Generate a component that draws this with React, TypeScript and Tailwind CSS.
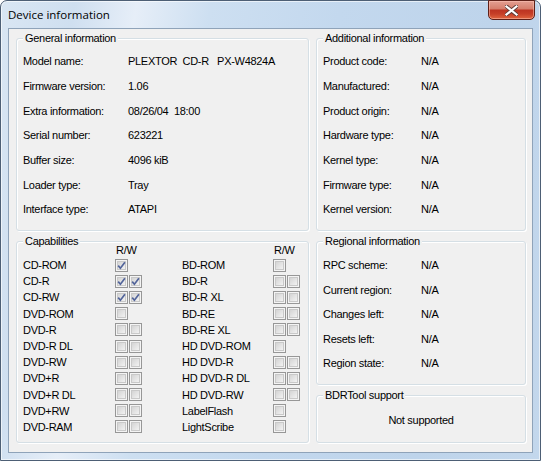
import React from "react";

const F = { fontFamily: '"Liberation Sans", Arial, sans-serif' };

function Group({ title, className, children }: { title: string; className: string; children?: React.ReactNode }) {
  return (
    <div
      className={
        "relative rounded-[3px] border border-[#d5dfe5] shadow-[inset_1px_1px_0_#ffffff,1px_1px_0_#ffffff] " + className
      }
    >
      <span className="absolute -top-[8px] left-[6px] bg-[#f0f0f0] px-[2px] leading-[14px] whitespace-nowrap">{title}</span>
      {children}
    </div>
  );
}

function Box({ checked }: { checked?: boolean }) {
  return (
    <svg width="13" height="13" viewBox="0 0 13 13" className="block shrink-0">
      <defs>
        <linearGradient id="cbg" x1="0" y1="0" x2="1" y2="1">
          <stop offset="0" stopColor="#d2d2d2" />
          <stop offset="1" stopColor="#f4f4f4" />
        </linearGradient>
      </defs>
      <rect x="0.5" y="0.5" width="12" height="12" fill="#f4f4f4" stroke="#979797" />
      <rect x="2.5" y="2.5" width="8" height="8" fill="url(#cbg)" stroke="#c9c9c9" />
      {checked && (
        <path d="M3.2 6.6 L5.4 9.2 L9.9 3.2" fill="none" stroke="#52649a" strokeWidth="1.7" strokeLinejoin="miter" />
      )}
    </svg>
  );
}

function Boxes({ n, c }: { n: number; c: boolean[] }) {
  return (
    <div className="flex gap-[1px]">
      <Box checked={c[0]} />
      {n === 2 && <Box checked={c[1]} />}
    </div>
  );
}

const general: [string, string][] = [
  ["Model name:", "PLEXTOR  CD-R   PX-W4824A"],
  ["Firmware version:", "1.06"],
  ["Extra information:", "08/26/04  18:00"],
  ["Serial number:", "623221"],
  ["Buffer size:", "4096 kiB"],
  ["Loader type:", "Tray"],
  ["Interface type:", "ATAPI"],
];

const additional = [
  "Product code:",
  "Manufactured:",
  "Product origin:",
  "Hardware type:",
  "Kernel type:",
  "Firmware type:",
  "Kernel version:",
];

const regional = ["RPC scheme:", "Current region:", "Changes left:", "Resets left:", "Region state:"];

type Cap = [string, number, boolean[]];
const left: Cap[] = [
  ["CD-ROM", 1, [true]],
  ["CD-R", 2, [true, true]],
  ["CD-RW", 2, [true, true]],
  ["DVD-ROM", 1, [false]],
  ["DVD-R", 2, [false, false]],
  ["DVD-R DL", 2, [false, false]],
  ["DVD-RW", 2, [false, false]],
  ["DVD+R", 2, [false, false]],
  ["DVD+R DL", 2, [false, false]],
  ["DVD+RW", 2, [false, false]],
  ["DVD-RAM", 2, [false, false]],
];
const right: Cap[] = [
  ["BD-ROM", 1, [false]],
  ["BD-R", 2, [false, false]],
  ["BD-R XL", 2, [false, false]],
  ["BD-RE", 2, [false, false]],
  ["BD-RE XL", 2, [false, false]],
  ["HD DVD-ROM", 1, [false]],
  ["HD DVD-R", 2, [false, false]],
  ["HD DVD-R DL", 2, [false, false]],
  ["HD DVD-RW", 2, [false, false]],
  ["LabelFlash", 1, [false]],
  ["LightScribe", 1, [false]],
];

export default function App() {
  return (
    <div className="w-[541px] h-[461px] overflow-hidden bg-white">
      <div className="w-[541px] h-[461px] flex flex-col rounded-t-[7px] border border-[#4d5f75] bg-[linear-gradient(100deg,#d9e6f3_0%,#cfdff0_12%,#e6eef8_22%,#cddff1_34%,#c3d8ee_55%,#bed4eb_80%,#c3d7ec_100%)] shadow-[inset_0_0_0_1px_rgba(255,255,255,0.6)]">
        {/* title bar */}
        <div className="h-[27px] flex items-start justify-between">
          <div
            className="pl-[7px] pt-[6px] text-[11.5px] leading-[16px] text-black"
            style={{ fontFamily: '"Open Sans", "Noto Sans", sans-serif' }}
          >
            Device information
          </div>
          <div className="mr-[5px] -mt-[1px] w-[47px] h-[20px] rounded-b-[5px] border border-[#5e2018] bg-[linear-gradient(180deg,#e39f92_0%,#d67f6d_42%,#bd3522_52%,#c63f28_72%,#e0663f_100%)] shadow-[inset_0_0_0_1px_rgba(255,200,185,0.5)] flex items-center justify-center">
            <svg width="13" height="11" viewBox="0 0 13 11">
              <path
                d="M1.5 1.5 L11.5 9.5 M11.5 1.5 L1.5 9.5"
                stroke="#5a3a36"
                strokeWidth="4"
                strokeLinecap="square"
              />
              <path
                d="M1.5 1.5 L11.5 9.5 M11.5 1.5 L1.5 9.5"
                stroke="#ffffff"
                strokeWidth="2.2"
                strokeLinecap="square"
              />
            </svg>
          </div>
        </div>
        {/* client */}
        <div
          className="mx-[7px] h-[425px] border border-[#8fa3b9] bg-[#f0f0f0] text-[11px] leading-[14px] tracking-[-0.3px] text-black"
          style={F}
        >
          <div className="flex pl-[7px] pt-[9px] gap-[7px]">
            {/* left column */}
            <div className="w-[293px] flex flex-col gap-[10px]">
              <Group title="General information" className="h-[193px] pt-[10px]">
                {general.map(([l, v]) => (
                  <div key={l} className="h-[24.67px] flex items-center">
                    <div className="w-[111px] pl-[6px] whitespace-pre">{l}</div>
                    <div className="whitespace-pre">{v}</div>
                  </div>
                ))}
              </Group>
              <Group title="Capabilities" className="h-[202px] pt-[1px]">
                <div className="h-[14px] flex items-center">
                  <div className="w-[99px]" />
                  <div className="w-[158px]">R/W</div>
                  <div>R/W</div>
                </div>
                {left.map((lc, i) => {
                  const rc = right[i];
                  return (
                    <div key={lc[0]} className="h-[16.2px] flex items-center">
                      <div className="w-[98px] pl-[6px] whitespace-nowrap">{lc[0]}</div>
                      <div className="w-[67px]">
                        <Boxes n={lc[1]} c={lc[2]} />
                      </div>
                      <div className="w-[91px] whitespace-nowrap">{rc[0]}</div>
                      <Boxes n={rc[1]} c={rc[2]} />
                    </div>
                  );
                })}
              </Group>
            </div>
            {/* right column */}
            <div className="w-[210px] flex flex-col gap-[10px]">
              <Group title="Additional information" className="h-[193px] pt-[10px]">
                {additional.map((l) => (
                  <div key={l} className="h-[24.67px] flex items-center">
                    <div className="w-[104px] pl-[6px] whitespace-nowrap">{l}</div>
                    <div>N/A</div>
                  </div>
                ))}
              </Group>
              <Group title="Regional information" className="h-[144px] pt-[11px]">
                {regional.map((l) => (
                  <div key={l} className="h-[24.5px] flex items-center">
                    <div className="w-[104px] pl-[6px] whitespace-nowrap">{l}</div>
                    <div>N/A</div>
                  </div>
                ))}
              </Group>
              <Group title="BDRTool support" className="h-[48px] pt-[17px]">
                <div className="text-center">Not supported</div>
              </Group>
            </div>
          </div>
        </div>
      </div>
    </div>
  );
}
